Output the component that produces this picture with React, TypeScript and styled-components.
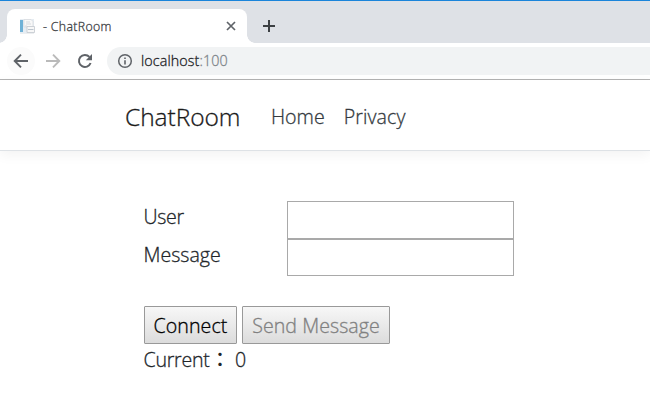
import React from "react";
import styled, { createGlobalStyle } from "styled-components";

const GlobalStyle = createGlobalStyle`
  * { box-sizing: border-box; }
  html, body { margin: 0; padding: 0; background: #fff; overflow: hidden; }
  body { font-family: "Open Sans", "Noto Sans", "Noto Sans CJK TC", sans-serif; color: #212529; }
`;

const Window = styled.div`
  width: 650px;
  height: 404px;
  display: flex;
  flex-direction: column;
  background: #fff;
`;

const TabStrip = styled.div`
  height: 43px;
  flex: none;
  display: flex;
  align-items: flex-end;
  padding-left: 7px;
  background: #dee1e6;
  border-top: 1px solid #1a84da;
`;

const Tab = styled.div`
  position: relative;
  width: 240px;
  height: 34px;
  display: flex;
  align-items: center;
  padding: 0 10px 0 12px;
  border-radius: 8px 8px 0 0;
  background: #fff;

  &::before,
  &::after {
    content: "";
    position: absolute;
    bottom: 0;
    width: 8px;
    height: 8px;
  }
  &::before {
    left: -8px;
    background: radial-gradient(circle at 0 0, transparent 7.5px, #fff 8px);
  }
  &::after {
    right: -8px;
    background: radial-gradient(circle at 100% 0, transparent 7.5px, #fff 8px);
  }
`;

interface TextProps {
  $size: number;
  $spacing?: number;
  $color?: string;
}

const Text = styled.span<TextProps>`
  font-size: ${(p) => p.$size}px;
  font-weight: 300;
  -webkit-text-stroke: 0.3px currentColor;
  letter-spacing: ${(p) => p.$spacing ?? 0}px;
  color: ${(p) => p.$color ?? "inherit"};
  line-height: 30px;
  white-space: pre;
`;

const TabTitle = styled(Text)`
  flex: 1;
  margin-left: 7px;
  padding-top: 2px;
`;

const NewTab = styled.div`
  width: 44px;
  height: 34px;
  display: flex;
  align-items: center;
  justify-content: center;
`;

const Toolbar = styled.div`
  height: 37px;
  flex: none;
  display: flex;
  align-items: flex-start;
  padding: 4px 0 0 7px;
  border-bottom: 1px solid #b3b3b3;
`;

const NavButton = styled.div<{ $lit?: boolean }>`
  width: 28px;
  height: 28px;
  margin-right: 4px;
  display: flex;
  align-items: center;
  justify-content: center;
  border-radius: 50%;
  background: ${(p) => (p.$lit ? "#fbfbfb" : "transparent")};
`;

const AddressBar = styled.div`
  flex: 1;
  height: 28px;
  margin-left: 4px;
  display: flex;
  align-items: center;
  padding-left: 10px;
  border-radius: 14px 0 0 14px;
  background: #f1f3f4;
`;

const Url = styled.div`
  display: flex;
  margin-left: 8px;
`;

const SiteHeader = styled.header`
  height: 71px;
  flex: none;
  display: flex;
  align-items: center;
  padding: 3px 0 0 125px;
  border-bottom: 1px solid #dee2e6;
  box-shadow: 0 4px 12px rgba(0, 0, 0, 0.05);
`;

const Brand = styled.div`
  width: 146px;
  display: flex;
`;

const NavLink = styled.div`
  display: flex;
  margin-right: 19px;
`;

const Main = styled.main`
  padding: 50px 0 0 143.5px;
`;

const FormRow = styled.div<{ $height: number }>`
  display: grid;
  grid-template-columns: 143.5px 227px;
  height: ${(p) => p.$height}px;
`;

const Label = styled.label`
  display: flex;
  height: 30px;
  margin-top: 1px;
`;

const Field = styled.input`
  width: 100%;
  height: 100%;
  border: 1px solid #a9a9a9;
  border-radius: 0;
  outline: none;
  background: #fff;
`;

const Actions = styled.div`
  display: flex;
  gap: 5px;
  margin: 30px 0 0 0.5px;
`;

const ActionButton = styled.button<{ $width: number }>`
  width: ${(p) => p.$width}px;
  height: 38px;
  padding: 1px 0 0;
  display: flex;
  align-items: center;
  justify-content: center;
  border: 1px solid #999;
  border-radius: 1px;
  background: linear-gradient(#f7f7f7, #dcdcdc);
  font-family: inherit;
`;

const Status = styled.div`
  display: flex;
  height: 30px;
  margin-top: 1px;
`;

const CurrentLabel = styled.div`
  width: 66.5px;
  display: flex;
`;

const Colon = styled.span`
  width: 25px;
  font: 500 20px/28px "Noto Sans CJK TC", sans-serif;
`;

function PageIcon() {
  return (
    <svg width="17" height="17" viewBox="0 0 17 17">
      <rect x="1" y="1" width="14" height="14" fill="#e6edf3" />
      <rect x="1" y="2" width="3" height="12" fill="#6fb1d6" />
      <path d="M5 1.5h7l2 2V9H5z" fill="#f8f8f8" stroke="#d5d8dc" strokeWidth=".7" />
      <path d="M7 4h4M7 6h5M6 8h2" stroke="#cbd0d6" strokeWidth=".7" />
      <path d="M8 8.5h7.5v6H8z" fill="#f7f7f7" stroke="#c3c8ce" strokeWidth=".8" />
      <path d="M9 11.5h5.5" stroke="#bcc5ce" />
      <path d="M1 15.5h14" stroke="#dfe2e5" strokeWidth=".6" />
    </svg>
  );
}

function CloseIcon() {
  return (
    <svg width="12" height="12" viewBox="0 0 12 12" stroke="#5f6368" strokeWidth="1.7">
      <path d="M2 2l8 8M10 2l-8 8" />
    </svg>
  );
}

function PlusIcon() {
  return (
    <svg width="12" height="12" viewBox="0 0 12 12" stroke="#3c4043" strokeWidth="2">
      <path d="M6 0v12M0 6h12" />
    </svg>
  );
}

function ArrowIcon({ color, flip }: { color: string; flip?: boolean }) {
  return (
    <svg width="16" height="16" viewBox="0 0 16 16" fill="none" stroke={color} strokeWidth="1.9">
      <path d={flip ? "M1 8h13M8 1.7L14.3 8 8 14.3" : "M15 8H2M8 1.7L1.7 8 8 14.3"} />
    </svg>
  );
}

function ReloadIcon() {
  return (
    <svg width="16" height="16" viewBox="0 0 16 16">
      <path d="M13.6 10A6 6 0 1 1 12.4 3.9" fill="none" stroke="#5f6368" strokeWidth="2" />
      <path d="M15 1v6.2H8.8z" fill="#5f6368" />
    </svg>
  );
}

function InfoIcon() {
  return (
    <svg width="16" height="16" viewBox="0 0 16 16">
      <circle cx="8" cy="8" r="6.3" fill="none" stroke="#5f6368" strokeWidth="1.5" />
      <path d="M8 7.2v4.2M8 4.5v1.6" stroke="#5f6368" strokeWidth="1.6" />
    </svg>
  );
}

export default function App() {
  return (
    <Window>
      <GlobalStyle />
      <TabStrip>
        <Tab>
          <PageIcon />
          <TabTitle $size={12.3} $spacing={0.35} $color="#3c4043">- ChatRoom</TabTitle>
          <CloseIcon />
        </Tab>
        <NewTab><PlusIcon /></NewTab>
      </TabStrip>
      <Toolbar>
        <NavButton $lit><ArrowIcon color="#5f6368" /></NavButton>
        <NavButton><ArrowIcon color="#bababa" flip /></NavButton>
        <NavButton><ReloadIcon /></NavButton>
        <AddressBar>
          <InfoIcon />
          <Url>
            <Text $size={14.3} $spacing={0.1} $color="#202124">localhost</Text>
            <Text $size={14.3} $spacing={0.1} $color="#80868b">:100</Text>
          </Url>
        </AddressBar>
      </Toolbar>
      <SiteHeader>
        <Brand><Text $size={24.5} $spacing={-0.05} $color="#1a1a1a">ChatRoom</Text></Brand>
        <NavLink><Text $size={19.6} $color="#343a40">Home</Text></NavLink>
        <NavLink><Text $size={19.6} $spacing={0.1} $color="#343a40">Privacy</Text></NavLink>
      </SiteHeader>
      <Main>
        <FormRow $height={38}>
          <Label htmlFor="user"><Text $size={19.6} $spacing={-0.3}>User</Text></Label>
          <Field id="user" />
        </FormRow>
        <FormRow $height={37}>
          <Label htmlFor="message"><Text $size={19.6}>Message</Text></Label>
          <Field id="message" />
        </FormRow>
        <Actions>
          <ActionButton $width={93}><Text $size={19.6} $spacing={0.05} $color="#000">Connect</Text></ActionButton>
          <ActionButton $width={148} disabled><Text $size={19.6} $spacing={0.05} $color="#808080">Send Message</Text></ActionButton>
        </Actions>
        <Status>
          <CurrentLabel><Text $size={19.6} $spacing={-0.25}>Current</Text></CurrentLabel>
          <Colon>：</Colon>
          <Text $size={19.6}>0</Text>
        </Status>
      </Main>
    </Window>
  );
}
